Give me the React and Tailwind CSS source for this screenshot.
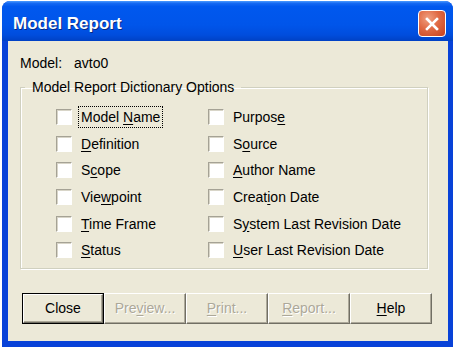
const LEFT = [
  { pre: 'Model ', key: 'N', post: 'ame', focus: true },
  { pre: '', key: 'D', post: 'efinition' },
  { pre: 'S', key: 'c', post: 'ope' },
  { pre: 'Vie', key: 'w', post: 'point' },
  { pre: '', key: 'T', post: 'ime Frame' },
  { pre: '', key: 'S', post: 'tatus' },
];

const RIGHT = [
  { pre: 'Purpos', key: 'e', post: '' },
  { pre: 'S', key: 'o', post: 'urce' },
  { pre: '', key: 'A', post: 'uthor Name' },
  { pre: 'Creat', key: 'i', post: 'on Date' },
  { pre: 'S', key: 'y', post: 'stem Last Revision Date' },
  { pre: '', key: 'U', post: 'ser Last Revision Date' },
];

const BUTTONS = [
  { pre: 'Close', key: '', post: '', isDefault: true },
  { pre: 'Pre', key: 'v', post: 'iew...', disabled: true },
  { pre: '', key: 'P', post: 'rint...', disabled: true },
  { pre: '', key: 'R', post: 'eport...', disabled: true },
  { pre: '', key: 'H', post: 'elp' },
];

function Label({ item }) {
  return (
    <span className="whitespace-nowrap">
      {item.pre}
      {item.key && <span className="underline underline-offset-[2px]">{item.key}</span>}
      {item.post}
    </span>
  );
}

function CheckRow({ item }) {
  return (
    <div className="flex h-[26.6px] items-center">
      <div className="h-[16px] w-[16px] shrink-0 border border-t-[#a5a295] border-l-[#a5a295] border-r-white border-b-white bg-white shadow-[inset_1px_1px_0_#d8d5c8]" />
      <div
        className={`ml-[6px] px-[2px] py-[2px] leading-[16px] ${
          item.focus ? 'border border-dotted border-black' : 'border border-transparent'
        }`}
      >
        <Label item={item} />
      </div>
    </div>
  );
}

function Button({ item }) {
  return (
    <div className={`h-[31px] w-[82px] bg-[#ece9d8] ${item.isDefault ? 'border border-black' : ''}`}>
      <div
        className={`flex h-full w-full items-center justify-center border border-t-white border-l-white border-r-[#716f64] border-b-[#716f64] shadow-[inset_-1px_-1px_0_#aca899] ${
          item.disabled ? 'text-[#aca899] [text-shadow:1px_1px_0_#fff]' : 'text-black'
        }`}
      >
        <Label item={item} />
      </div>
    </div>
  );
}

export default function App() {
  return (
    <div className="h-[348px] w-[455px] bg-white pl-[2px] pt-[1px] font-['Liberation_Sans',Arial,sans-serif] text-[14px] text-black">
      <div className="flex h-[346px] w-[451px] flex-col overflow-hidden rounded-t-[8px] bg-[#0842d8]">
        {/* title bar */}
        <div className="flex h-[40px] shrink-0 items-center justify-between bg-[linear-gradient(to_bottom,#4a9bff_0%,#1468f2_6%,#0058ee_14%,#0055ea_60%,#004ddd_85%,#0041c4_100%)] pl-[11px] pr-[7px]">
          <span className="mt-[5px] text-[17px] font-bold text-white [text-shadow:1px_1px_0_#0a2a80]">Model Report</span>
          <div className="mt-[5px] flex h-[27px] w-[28px] items-center justify-center rounded-[4px] border border-white bg-[radial-gradient(circle_at_35%_30%,#f0a080_0%,#e06a44_45%,#c7401d_100%)]">
            <svg width="16" height="16" viewBox="0 0 16 16">
              <path d="M3 3 L13 13 M13 3 L3 13" stroke="#fff" strokeWidth="2.6" strokeLinecap="square" />
            </svg>
          </div>
        </div>
        {/* body */}
        <div className="mb-[6px] ml-[6px] mr-[5px] flex-1 bg-[#ece9d8] px-[12px]">
          <div className="flex h-[38px] items-center pt-[6px]">
            <span className="w-[54px]">Model:</span>
            <span>avto0</span>
          </div>
          <fieldset className="h-[190px] w-[408px] border border-[#d0d0bf] px-0 pb-[6px] pt-[9px] shadow-[inset_1px_1px_0_#fff,1px_1px_0_#fff]">
            <legend className="ml-[4px] px-[7px] leading-[16px]">Model Report Dictionary Options</legend>
            <div className="flex pl-[35px]">
              <div className="w-[152px]">
                {LEFT.map((item) => (
                  <CheckRow key={item.post} item={item} />
                ))}
              </div>
              <div>
                {RIGHT.map((item) => (
                  <CheckRow key={item.post} item={item} />
                ))}
              </div>
            </div>
          </fieldset>
          <div className="mt-[24px] flex justify-between pl-[2px] pr-[4px]">
            {BUTTONS.map((item) => (
              <Button key={item.pre + item.post} item={item} />
            ))}
          </div>
        </div>
      </div>
    </div>
  );
}
